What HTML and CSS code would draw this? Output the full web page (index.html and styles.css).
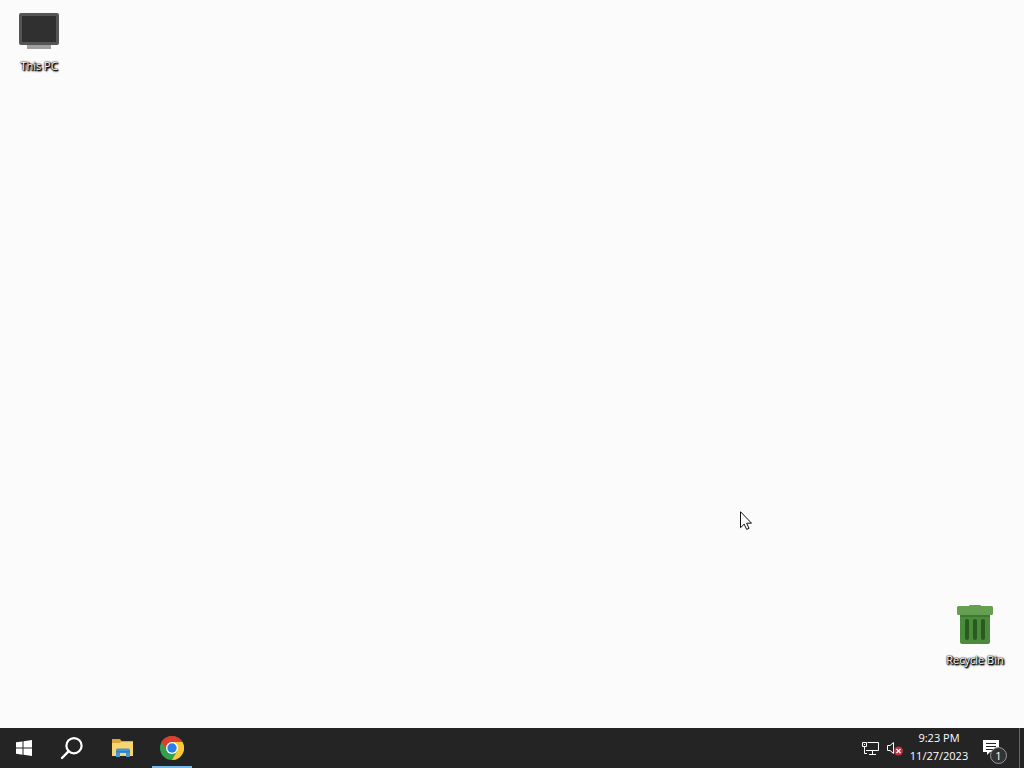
FILE: index.html
```html
<!DOCTYPE html>
<html lang="en">
<head>
<meta charset="utf-8">
<title>Desktop</title>
<link rel="stylesheet" href="styles.css">
</head>
<body class="screen">
<main class="desktop">
  <button class="shortcut" type="button">
    <svg class="shortcut-icon" viewBox="0 0 48 48" aria-hidden="true">
      <rect x="12" y="36" width="24" height="6" fill="#a0a0a0"/>
      <rect x="4" y="6" width="40" height="32" rx="2" fill="#555"/>
      <rect x="7" y="9" width="34" height="26" fill="#303030"/>
    </svg>
    <span class="shortcut-label">This PC</span>
  </button>
  <button class="shortcut shortcut-bin" type="button">
    <svg class="shortcut-icon" viewBox="0 0 48 48" aria-hidden="true">
      <rect x="18" y="4" width="12" height="3" rx="1" fill="#6a9c50"/>
      <path d="M9 10h30v31a2 2 0 0 1-2 2H11a2 2 0 0 1-2-2z" fill="#4b8c3c"/>
      <rect x="6" y="5" width="36" height="9" rx="1.5" fill="#65a052"/>
      <path d="M9 14h30v2H9z" fill="#3d7930"/>
      <path d="M16 20v17M24 20v17M32 20v17" stroke="#2a5a20" stroke-width="4" stroke-linecap="round"/>
    </svg>
    <span class="shortcut-label">Recycle Bin</span>
  </button>
  <svg class="pointer" viewBox="0 0 12 19" aria-hidden="true">
    <path d="M.5.7v16l3.700-3.600 2.400 5.300 2.400-1.100-2.400-5.100h4.900z" fill="#fff" stroke="#111" stroke-width="1"/>
  </svg>
</main>
<footer class="taskbar">
  <nav class="apps" aria-label="Apps">
    <button class="app" type="button" aria-label="Start">
      <svg class="app-icon" viewBox="0 0 24 24"><path d="M4 6.300l6.500-.9v6.100H4zM11.500 5.200L20 4v7.500h-8.500zM4 12.500h6.500v6.200L4 17.800zM11.500 12.500H20V20l-8.500-1.200z" fill="#fff"/></svg>
    </button>
    <button class="app" type="button" aria-label="Search">
      <svg class="app-icon" viewBox="0 0 24 24"><circle cx="14" cy="9.700" r="7.600" fill="none" stroke="#fff" stroke-width="2.200"/><path d="M8.500 15.300L2 22" stroke="#fff" stroke-width="2.400" stroke-linecap="round"/></svg>
    </button>
    <button class="app app-pinned" type="button" aria-label="File Explorer">
      <svg class="app-icon" viewBox="0 0 24 24">
        <path d="M2 3h8l1.500 2H23v15H2z" fill="#dfa53a"/>
        <path d="M2 7h8l1-1h12v14H2z" fill="#f8d570"/>
        <path d="M6 21v-7a1.500 1.500 0 0 1 1.500-1.500h11A1.500 1.500 0 0 1 20 14v7h-4v-4h-6v4z" fill="#4596d4"/>
        <path d="M6 15h14v1.500H6z" fill="#347fc0"/>
      </svg>
    </button>
    <button class="app app-open" type="button" aria-label="Google Chrome">
      <svg class="app-icon" viewBox="0 0 24 24">
        <circle cx="12" cy="12" r="12" fill="#34a04f"/>
        <path d="M12 6H22.400A12 12 0 0 1 12 24L17.200 15z" fill="#fcc934"/>
        <path d="M1.600 6A12 12 0 0 1 22.400 6H12a6 6 0 0 0-5.200 9z" fill="#e33b2e"/>
        <circle cx="12" cy="12" r="6" fill="#fff"/>
        <circle cx="12" cy="12" r="4.700" fill="#2b7de9"/>
      </svg>
    </button>
  </nav>
  <div class="tray">
    <button class="tray-button" type="button" aria-label="Network">
      <svg class="tray-icon" viewBox="0 0 18 18"><path d="M5.500 3.500h11v8H4M10.500 12v3.500M7 15.500h7M2.500 7v7.500H5" fill="none" stroke="#fff"/><path d="M.5 3.500h4v4h-4z" fill="#242424" stroke="#fff"/><path d="M2 5h1v1H2z" fill="#fff"/></svg>
    </button>
    <button class="tray-button" type="button" aria-label="Volume muted">
      <svg class="tray-icon" viewBox="0 0 18 18"><path d="M1.500 6.500H4l3.500-3v11L4 11.500H1.500z" fill="none" stroke="#fff"/><circle cx="12.500" cy="12" r="4.500" fill="#c52f43"/><path d="M10.500 10l4 4M14.500 10l-4 4" stroke="#fff" stroke-width="1.300"/></svg>
    </button>
    <button class="clock" type="button"><span>9:23 PM</span><span>11/27/2023</span></button>
    <button class="notices" type="button" aria-label="Notifications">
      <svg class="notices-icon" viewBox="0 0 18 18"><path d="M1 1h16v12H8l-3 3v-3H1z" fill="#fff"/><path d="M4 4.500h10M4 7.500h10M4 10.500h7" stroke="#242424"/></svg>
      <span class="badge">1</span>
    </button>
    <button class="show-desktop" type="button" aria-label="Show desktop"></button>
  </div>
</footer>
</body>
</html>
```

FILE: styles.css
```css
* {
  box-sizing: border-box;
}

.screen {
  display: flex;
  flex-direction: column;
  min-height: 100vh;
  margin: 0;
  background: #fbfbfb;
  font-family: "Open Sans", "Noto Sans", sans-serif;
  font-size: 11px;
}

button {
  margin: 0;
  padding: 0;
  border: 0;
  background: none;
  color: #fff;
  font: inherit;
}

.desktop {
  position: relative;
  flex: 1;
  display: flex;
  flex-direction: column;
  justify-content: space-between;
  align-items: flex-start;
  padding: 7px 10px 60px 0;
}

.shortcut {
  display: flex;
  flex-direction: column;
  align-items: center;
  gap: 3px;
  width: 78px;
}

.shortcut-bin {
  align-self: flex-end;
}

.shortcut-icon {
  width: 48px;
  height: 48px;
}

.shortcut-label {
  line-height: 16px;
  text-shadow: 0 0 1px #000, 0 0 2px #000, 1px 1px 1px #000, 1px 1px 2px #000, 1px 1px 2px #000;
}

.pointer {
  position: absolute;
  left: 740px;
  top: 511px;
  width: 12px;
  height: 19px;
}

.taskbar {
  display: flex;
  justify-content: space-between;
  height: 40px;
  background: #242424;
}

.apps {
  display: flex;
}

.app {
  display: grid;
  place-items: center;
  width: 48px;
}

.app-icon {
  width: 24px;
  height: 24px;
}

.app-pinned {
  margin-left: 2px;
}

.app-open {
  width: 40px;
  margin-left: 6px;
  border-top: 2px solid transparent;
  border-bottom: 2px solid #76b9ed;
}

.tray {
  display: flex;
}

.tray-button {
  display: grid;
  place-items: center;
  width: 24px;
  padding-left: 4px;
}

.tray-icon,
.notices-icon {
  display: block;
  width: 18px;
  height: 18px;
}

.clock {
  display: flex;
  flex-direction: column;
  justify-content: center;
  align-items: center;
  width: 68px;
  padding-bottom: 2px;
  line-height: 18px;
}

.notices {
  position: relative;
  display: grid;
  place-items: center;
  width: 46px;
  padding-right: 10px;
}

.badge {
  position: absolute;
  right: 12px;
  bottom: 4px;
  width: 17px;
  height: 17px;
  border: 1px solid #999;
  border-radius: 50%;
  background: #333;
  line-height: 15px;
  text-align: center;
}

.show-desktop {
  width: 5px;
  border-left: 1px solid #666;
}
```
